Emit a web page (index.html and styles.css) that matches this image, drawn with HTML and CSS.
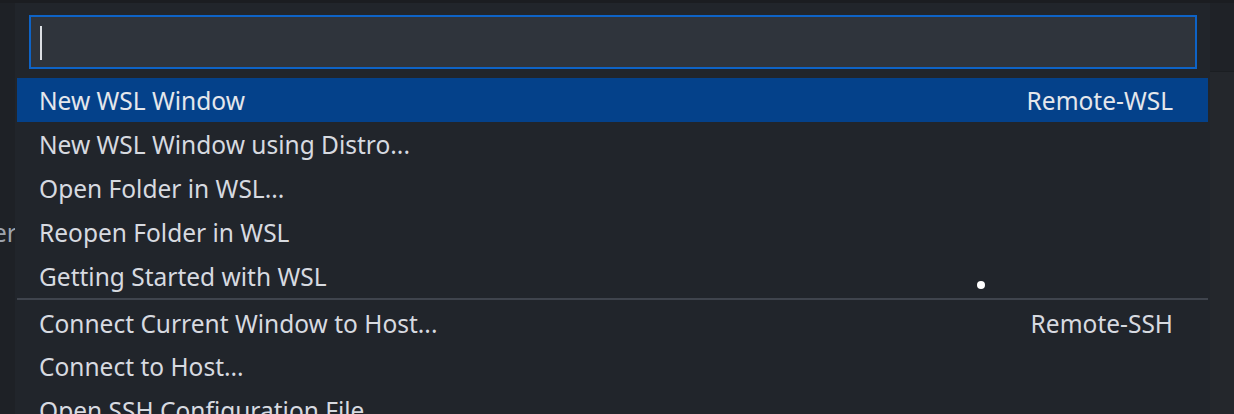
FILE: index.html
```html
<!DOCTYPE html>
<html>
<head>
<meta charset="utf-8">
<link rel="stylesheet" href="styles.css">
</head>
<body>
<div class="workbench">
  <div class="topbar"></div>
  <div class="main">
    <div class="sidebar"><span class="side-text">Folder</span></div>
    <div class="editor"></div>
    <div class="rightpane">
      <div class="right-top"></div>
      <div class="right-bottom"></div>
    </div>
  </div>
</div>

<div class="palette">
  <div class="input-wrap">
    <div class="input"><span class="caret"></span></div>
  </div>
  <ul class="list">
    <li class="item selected"><span class="label">New WSL Window</span><span class="detail">Remote-WSL</span></li>
    <li class="item"><span class="label">New WSL Window using Distro...</span></li>
    <li class="item"><span class="label">Open Folder in WSL...</span></li>
    <li class="item"><span class="label">Reopen Folder in WSL</span></li>
    <li class="item"><span class="label">Getting Started with WSL</span></li>
    <li class="item sep"><span class="label">Connect Current Window to Host...</span><span class="detail">Remote-SSH</span></li>
    <li class="item"><span class="label">Connect to Host...</span></li>
    <li class="item"><span class="label">Open SSH Configuration File...</span></li>
  </ul>
</div>
<div class="dot"></div>
</body>
</html>
```
FILE: styles.css
```css
* { box-sizing: border-box; }
html, body { margin: 0; padding: 0; }
body {
  width: 1234px;
  height: 414px;
  overflow: hidden;
  background: #23272d;
  font-family: "Noto Sans", "Open Sans", sans-serif;
  position: relative;
}
.workbench { display: flex; flex-direction: column; height: 414px; }
.topbar { height: 3px; background: #1b1d21; flex: none; }
.main { flex: 1; display: flex; }
.sidebar {
  width: 15px; background: #1e2126; flex: none; overflow: hidden; position: relative;
}
.side-text {
  position: absolute; top: 213px; right: -2px;
  font-size: 24.5px; color: #9da3ad; white-space: nowrap;
}
.editor { flex: 1; background: #23272d; }
.rightpane { width: 24px; flex: none; display: flex; flex-direction: column; }
.right-top { height: 69px; background: #1f2227; border-bottom: 1px solid #1b1e22; }
.right-bottom { flex: 1; background: #24272c; }

.palette {
  position: absolute;
  left: 15px; top: 3px;
  width: 1195px; height: 420px;
  background: #21252b;
  padding-top: 12px;
}
.input-wrap { padding: 0 13px 0 14px; }
.input {
  height: 54px;
  border: 2px solid #0e63c6;
  background: #2f343c;
  position: relative;
}
.caret {
  position: absolute; left: 9px; top: 9px;
  width: 2px; height: 34px; background: #dcdfe4;
}
.list { list-style: none; margin: 9px 0 0; padding: 0 2px; }
.item {
  height: 44px;
  display: flex; align-items: center; justify-content: space-between;
  padding: 0 35px 0 22px;
  font-size: 24.5px;
  color: #d7dae0;
  white-space: nowrap;
}
.item.selected { background: #04418a; color: #e4e7ec; }
.item.sep { border-top: 2px solid #3f444d; height: 46px; padding-top: 2px; }
.dot {
  position: absolute; left: 977px; top: 281px;
  width: 8px; height: 8px; border-radius: 50%; background: #ffffff;
}
```
